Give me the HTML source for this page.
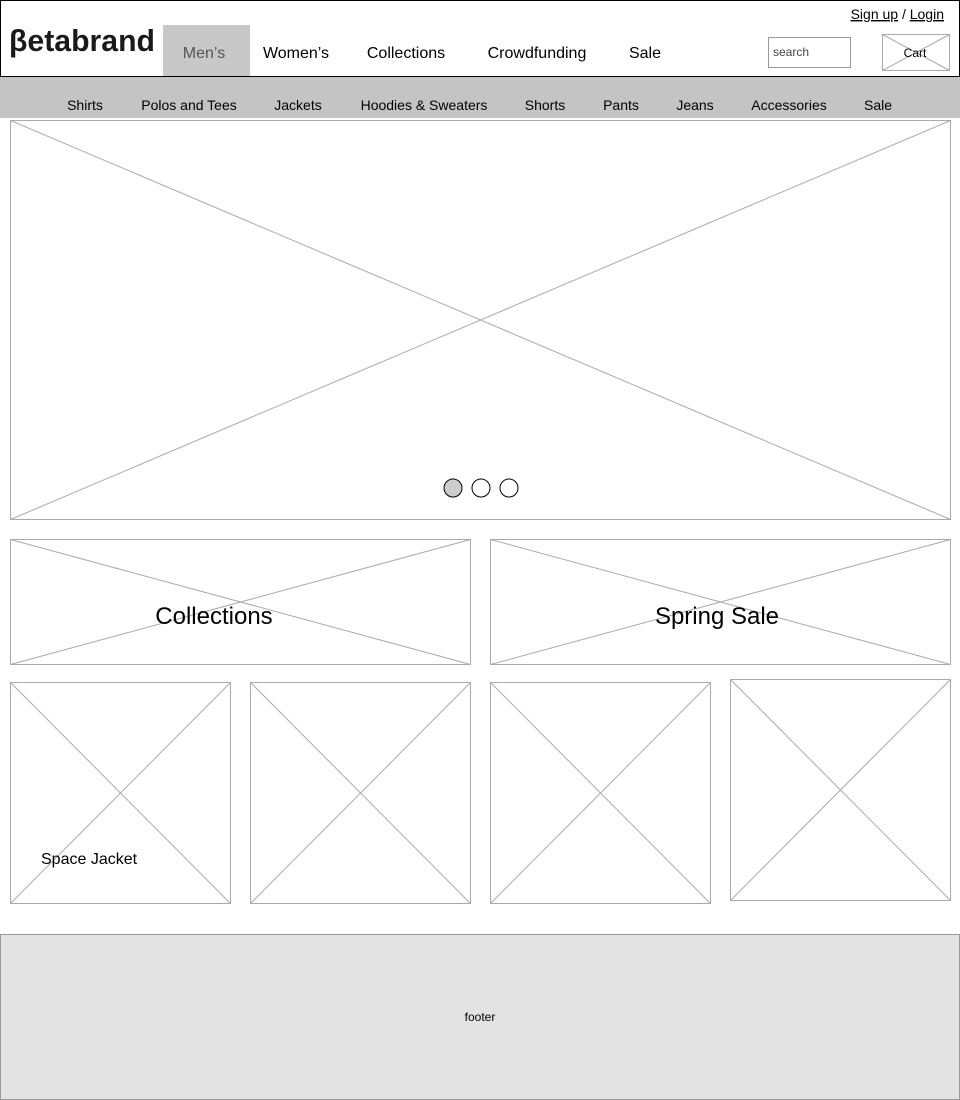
<!DOCTYPE html>
<html><head><meta charset="utf-8"><style>
html,body{margin:0;padding:0;background:#fff;width:960px;height:1100px;overflow:hidden}
svg{display:block}
text{font-family:"Liberation Sans",Arial,sans-serif}
</style></head><body>
<svg width="960" height="1100" viewBox="0 0 960 1100" xmlns="http://www.w3.org/2000/svg">
<!-- header -->
<rect x="0.5" y="0.5" width="959" height="76" fill="#fff" stroke="#000"/>
<rect x="163" y="25" width="87" height="51" fill="#c8c8c8"/>
<text x="9" y="51" font-size="31" font-weight="bold" fill="#1a1a1a" textLength="146" lengthAdjust="spacingAndGlyphs">βetabrand</text>
<text x="204" y="58" font-size="16" fill="#555" text-anchor="middle">Men’s</text>
<text x="296" y="58" font-size="16" fill="#000" text-anchor="middle">Women’s</text>
<text x="406" y="58" font-size="16" fill="#000" text-anchor="middle">Collections</text>
<text x="537" y="58" font-size="16" fill="#000" text-anchor="middle">Crowdfunding</text>
<text x="645" y="58" font-size="16" fill="#000" text-anchor="middle">Sale</text>
<text x="944" y="19" font-size="14" fill="#000" text-anchor="end"><tspan text-decoration="underline">Sign up</tspan> / <tspan text-decoration="underline">Login</tspan></text>
<rect x="768.5" y="37.5" width="82" height="30" fill="#fff" stroke="#999"/>
<text x="773" y="56" font-size="12" fill="#444">search</text>
<rect x="882.5" y="34.5" width="67" height="36" fill="#fff" stroke="#aaa"/>
<path d="M882.5 34.5L949.5 70.5M949.5 34.5L882.5 70.5" stroke="#aaa"/>
<text x="915" y="57" font-size="12" fill="#000" text-anchor="middle">Cart</text>
<!-- subnav -->
<rect x="0" y="77" width="960" height="41" fill="#c4c4c4"/>
<g font-size="14" fill="#000" text-anchor="middle">
<text x="85" y="110">Shirts</text>
<text x="189" y="110">Polos and Tees</text>
<text x="298" y="110">Jackets</text>
<text x="424" y="110">Hoodies &amp; Sweaters</text>
<text x="545" y="110">Shorts</text>
<text x="621" y="110">Pants</text>
<text x="695" y="110">Jeans</text>
<text x="789" y="110">Accessories</text>
<text x="878" y="110">Sale</text>
</g>
<!-- placeholders -->
<g fill="#fff" stroke="#aaa">
<rect x="10.5" y="120.5" width="940" height="399"/>
<path d="M10.5 120.5L950.5 519.5M950.5 120.5L10.5 519.5"/>
<rect x="10.5" y="539.5" width="460" height="125"/>
<path d="M10.5 539.5L470.5 664.5M470.5 539.5L10.5 664.5"/>
<rect x="490.5" y="539.5" width="460" height="125"/>
<path d="M490.5 539.5L950.5 664.5M950.5 539.5L490.5 664.5"/>
<rect x="10.5" y="682.5" width="220" height="221"/>
<path d="M10.5 682.5L230.5 903.5M230.5 682.5L10.5 903.5"/>
<rect x="250.5" y="682.5" width="220" height="221"/>
<path d="M250.5 682.5L470.5 903.5M470.5 682.5L250.5 903.5"/>
<rect x="490.5" y="682.5" width="220" height="221"/>
<path d="M490.5 682.5L710.5 903.5M710.5 682.5L490.5 903.5"/>
<rect x="730.5" y="679.5" width="220" height="221"/>
<path d="M730.5 679.5L950.5 900.5M950.5 679.5L730.5 900.5"/>
</g>
<circle cx="453" cy="488" r="9" fill="#ccc" stroke="#000"/>
<circle cx="481" cy="488" r="9" fill="#fff" stroke="#000"/>
<circle cx="509" cy="488" r="9" fill="#fff" stroke="#000"/>
<text x="214" y="624" font-size="24" fill="#000" text-anchor="middle">Collections</text>
<text x="717" y="624" font-size="24" fill="#000" text-anchor="middle">Spring Sale</text>
<text x="41" y="864" font-size="16" fill="#000">Space Jacket</text>
<!-- footer -->
<rect x="0.5" y="934.5" width="959" height="165" fill="#e3e3e3" stroke="#999"/>
<text x="480" y="1021" font-size="12" fill="#000" text-anchor="middle">footer</text>
</svg>
</body></html>
